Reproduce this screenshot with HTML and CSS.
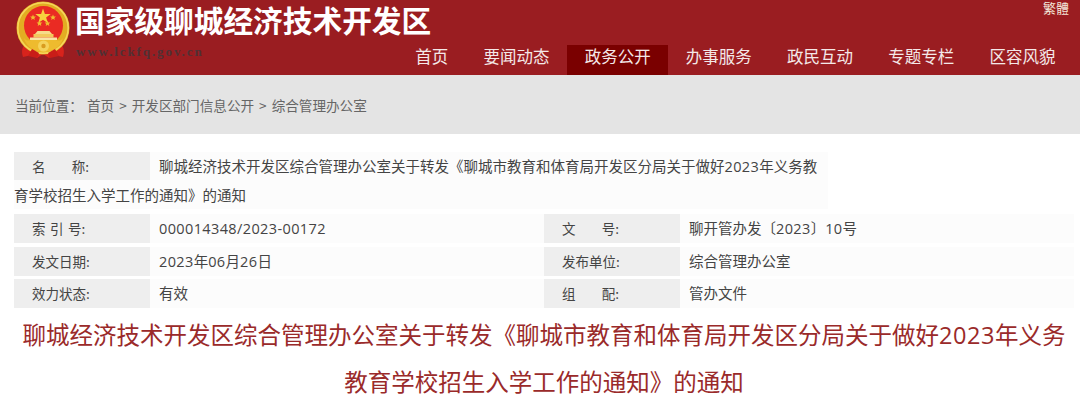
FILE: index.html
```html
<!DOCTYPE html>
<html lang="zh-CN">
<head>
<meta charset="utf-8">
<title>聊城经济技术开发区</title>
<link rel="stylesheet" href="styles.css">
</head>
<body>
<header class="header">
  <div class="brand">
    <svg class="emblem" viewBox="0 0 60 60" width="60" height="60" aria-hidden="true">
      <path d="M15 42 C9 44 8 50 10 56 L19 54 L24 57 L30 53 L36 57 L41 54 L50 56 C52 50 51 44 45 42 Z" fill="#d8231c"/>
      <circle cx="30" cy="27" r="26.5" fill="#e3ad22"/>
      <circle cx="30" cy="27" r="25.2" fill="none" stroke="#f5d65a" stroke-width="1.6"/>
      <circle cx="30.5" cy="24.5" r="19.5" fill="#ea2b23"/>
      <polygon points="30,7.5 31.9,13 37.7,13.1 33.1,16.6 34.8,22 30,18.8 25.2,22 26.9,16.6 22.3,13.1 28.1,13" fill="#f7d23e"/>
      <polygon points="20,13.5 20.8,15.4 22.9,15.5 21.3,16.9 21.8,18.9 20,17.8 18.2,18.9 18.7,16.9 17.1,15.5 19.2,15.4" fill="#f0bf30"/>
      <polygon points="40,13.5 40.8,15.4 42.9,15.5 41.3,16.9 41.8,18.9 40,17.8 38.2,18.9 38.7,16.9 37.1,15.5 39.2,15.4" fill="#f0bf30"/>
      <polygon points="26.5,19.5 27.3,21.4 29.4,21.5 27.8,22.9 28.3,24.9 26.5,23.8 24.7,24.9 25.2,22.9 23.6,21.5 25.7,21.4" fill="#f0bf30"/>
      <polygon points="34.5,19.5 35.3,21.4 37.4,21.5 35.8,22.9 36.3,24.9 34.5,23.8 32.7,24.9 33.2,22.9 31.6,21.5 33.7,21.4" fill="#f0bf30"/>
      <path d="M22 33 L39 33 L36.5 30 L24.5 30 Z" fill="#f6dc8a"/>
      <rect x="20.5" y="33" width="20" height="3.5" fill="#f2c95c"/>
      <rect x="17" y="36.5" width="27" height="2.5" fill="#f8e6a4"/>
      <path d="M11 37 C14 41 16 39 20 39 L41 39 C45 39 47 41 50 37 C48 46 38 51 30.5 51 C23 51 13 46 11 37 Z" fill="#eebb2e"/>
      <circle cx="30.5" cy="45" r="5.5" fill="#f4d35c"/>
      <circle cx="30.5" cy="45" r="2.2" fill="#d99c1e"/>
      <path d="M19 48 L26 52 L24 57 L15 55 Z M42 48 L35 52 L37 57 L46 55 Z" fill="#c91d18"/>
    </svg>
    <div class="brand-text">
      <div class="brand-name">国家级聊城经济技术开发区</div>
      <div class="brand-url">www.lckfq.gov.cn</div>
    </div>
  </div>
  <div class="header-side">
    <a class="lang">繁體</a>
    <nav class="nav">
      <a class="nav-item">首页</a>
      <a class="nav-item">要闻动态</a>
      <a class="nav-item is-active">政务公开</a>
      <a class="nav-item">办事服务</a>
      <a class="nav-item">政民互动</a>
      <a class="nav-item">专题专栏</a>
      <a class="nav-item">区容风貌</a>
    </nav>
  </div>
</header>

<div class="crumbs">
  <span class="crumb-label">当前位置：</span>
  <a>首页</a><span class="sep">&gt;</span><a>开发区部门信息公开</a><span class="sep">&gt;</span><a>综合管理办公室</a>
</div>

<section class="meta">
  <div class="meta-name">
    <span class="meta-label meta-label-float"><span class="wide"><span>名</span><span>称:</span></span></span>聊城经济技术开发区综合管理办公室关于转发《聊城市教育和体育局开发区分局关于做好<span class="num">2023</span>年义务教育学校招生入学工作的通知》的通知
  </div>
  <div class="meta-grid">
    <div class="meta-row"><span class="meta-label meta-label-spaced">索 引 号:</span><span class="meta-value"><span class="num">000014348/2023-00172</span></span></div>
    <div class="meta-row"><span class="meta-label"><span class="wide"><span>文</span><span>号:</span></span></span><span class="meta-value">聊开管办发〔<span class="num">2023</span>〕<span class="num">10</span>号</span></div>
    <div class="meta-row"><span class="meta-label">发文日期:</span><span class="meta-value"><span class="num">2023</span>年<span class="num">06</span>月<span class="num">26</span>日</span></div>
    <div class="meta-row"><span class="meta-label">发布单位:</span><span class="meta-value">综合管理办公室</span></div>
    <div class="meta-row"><span class="meta-label">效力状态:</span><span class="meta-value">有效</span></div>
    <div class="meta-row"><span class="meta-label"><span class="wide"><span>组</span><span>配:</span></span></span><span class="meta-value">管办文件</span></div>
  </div>
</section>

<h1 class="title">聊城经济技术开发区综合管理办公室关于转发《聊城市教育和体育局开发区分局关于做好<span class="num-title">2023</span>年义务教育学校招生入学工作的通知》的通知</h1>
</body>
</html>
```
FILE: styles.css
```css
* { box-sizing: border-box; }
html, body { margin: 0; padding: 0; background: #fff; }
body {
  width: 1080px;
  height: 404px;
  overflow: hidden;
  font-family: "Noto Sans CJK SC", "Noto Sans", sans-serif;
  color: #444;
}
.header {
  height: 75px;
  background: #9a1d21;
  display: flex;
  justify-content: space-between;
}
.brand { flex: 1 1 0; min-width: 0; display: flex; align-items: flex-start; padding: 1px 0 0 13px; }
.emblem { flex: none; }
.brand-text { margin: 2px 0 0 2px; }
.brand-name {
  font-size: 29.7px;
  font-weight: 700;
  line-height: 34px;
  color: #fff;
  white-space: nowrap;
}
.brand-url {
  margin: 8px 0 0 1px;
  font-family: "Liberation Serif", serif;
  font-size: 13px;
  font-weight: 700;
  letter-spacing: 1.9px;
  line-height: 14px;
  color: #4f3135;
}
.header-side {
  flex: none;
  display: flex;
  flex-direction: column;
  align-items: flex-end;
  justify-content: space-between;
  padding-right: 7px;
}
.lang {
  margin: 1px 4px 0 0;
  font-size: 13px;
  line-height: 14px;
  color: #f3e6d8;
}
.nav { display: flex; white-space: nowrap; }
.nav-item {
  flex: none;
  height: 30px;
  line-height: 22px;
  padding: 0 17.6px;
  font-size: 16.5px;
  color: #f4e8e8;
}
.is-active { background: #7a0000; }
.crumbs {
  height: 59px;
  background: #e4e4e4;
  padding-left: 15px;
  display: flex;
  align-items: center;
  font-size: 13.6px;
  color: #666;
}
.crumb-label { width: 72px; }
.sep { margin: 0 5px; }
.meta { padding: 18px 6px 0 14px; font-size: 14.5px; }
.meta-name {
  width: 814px;
  background: #fcfcfc;
  line-height: 28px;
  min-height: 57px;
  margin-bottom: 5px;
}
.meta-label {
  flex: none;
  width: 136px;
  height: 29px;
  line-height: 28px;
  padding-left: 18px;
  background: #eee;
  font-size: 13.5px;
  color: #444;
}
.meta-label-float { float: left; height: 28px; margin-right: 9px; }
.meta-label-spaced { word-spacing: 1.5px; }
.wide { display: flex; width: 57px; justify-content: space-between; }
.meta-grid {
  display: grid;
  grid-template-columns: 530px 530px;
  row-gap: 3.5px;
}
.meta-row { display: flex; background: #fcfcfc; }
.meta-value { padding-left: 9px; line-height: 28px; }
.num { font-family: "Open Sans", sans-serif; letter-spacing: 0.38px; }
.title {
  margin: 3px 0 0;
  padding: 0 6px 0 14px;
  text-align: center;
  font-size: 23.5px;
  font-weight: 400;
  line-height: 46px;
  color: #9a2a2a;
}
.num-title { font-family: "Open Sans", sans-serif; letter-spacing: 0.6px; }
```
